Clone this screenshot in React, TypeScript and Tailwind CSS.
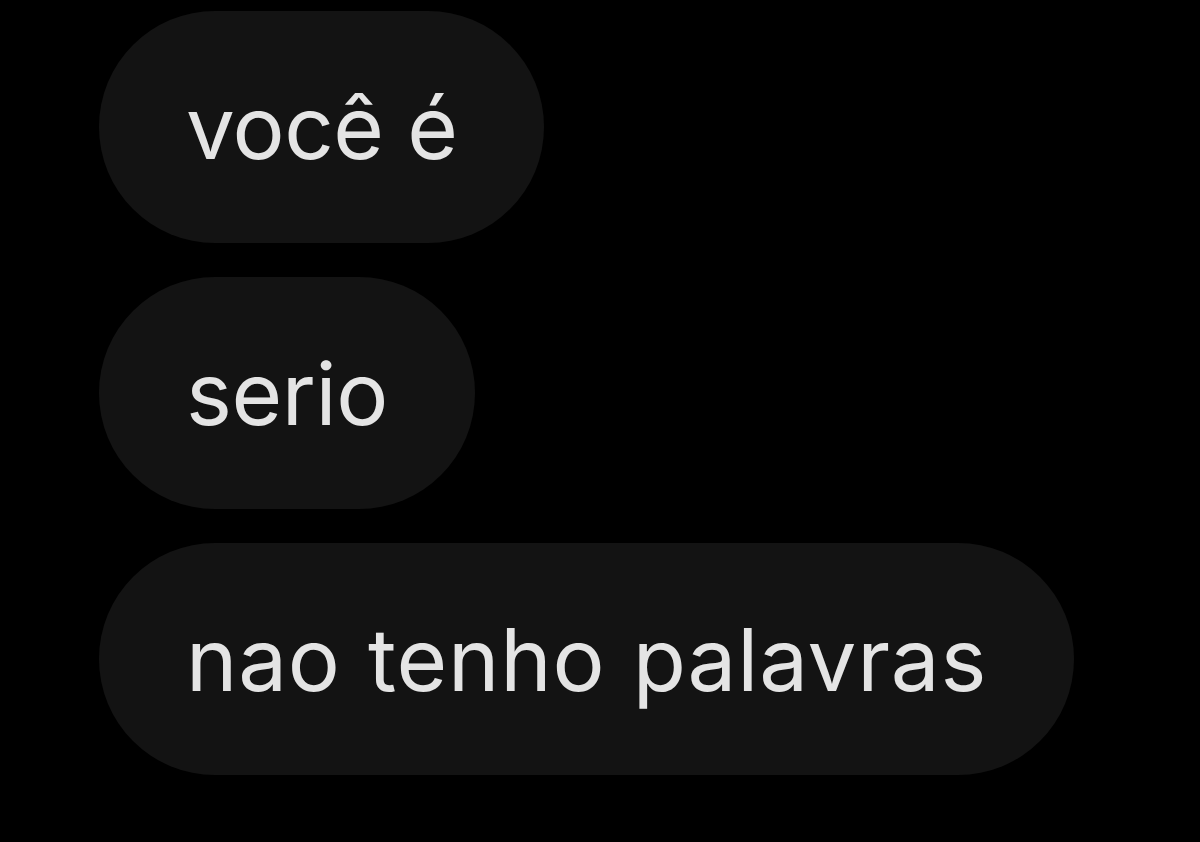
import React from "react";

const msgs = [
  { t: "você é", c: "tracking-[-0.6px]" },
  { t: "serio", c: "tracking-[-0.4px]" },
  { t: "nao tenho palavras", c: "tracking-[0.8px] [word-spacing:2px]" },
];

export default function App() {
  return (
    <div className="w-[1200px] h-[842px] bg-black overflow-hidden pl-[99px] pt-[11px] flex flex-col items-start gap-[34px]" style={{ fontFamily: "Inter, 'Noto Sans', sans-serif" }}>
      {msgs.map((m) => (
        <div key={m.t} className="h-[232px] rounded-full bg-[#131313] px-[87px] flex items-center">
          <span className={"text-[87px] leading-none text-[#e4e4e4] whitespace-nowrap " + m.c}>{m.t}</span>
        </div>
      ))}
    </div>
  );
}
